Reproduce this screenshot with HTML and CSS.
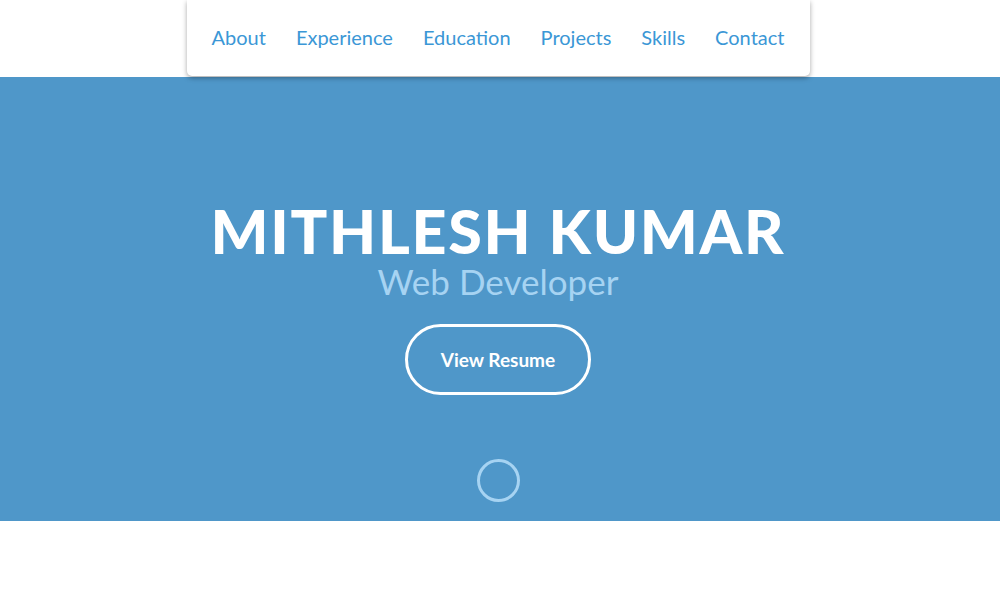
FILE: index.html
```html
<!DOCTYPE html>
<html>
<head>
<meta charset="utf-8">
<link rel="stylesheet" href="styles.css">
</head>
<body>
<header class="topbar">
  <nav class="nav">
    <a href="#">About</a>
    <a href="#">Experience</a>
    <a href="#">Education</a>
    <a href="#">Projects</a>
    <a href="#">Skills</a>
    <a href="#">Contact</a>
  </nav>
</header>
<section class="hero">
  <h1 class="name">MITHLESH KUMAR</h1>
  <p class="role">Web Developer</p>
  <a class="btn" href="#">View Resume</a>
  <span class="scroll"></span>
</section>
</body>
</html>
```
FILE: styles.css
```css
html, body { margin: 0; padding: 0; background: #fff; }
body { font-family: Lato, "Open Sans", sans-serif; }
.topbar {
  height: 77px;
  display: flex;
  justify-content: center;
  padding-right: 4px;
  position: relative;
  z-index: 2;
}
.nav {
  width: 623px;
  height: 76px;
  background: #fff;
  border-radius: 0 0 5px 5px;
  box-shadow: 0 2px 5px rgba(0,0,0,0.35);
  display: flex;
  justify-content: center;
  align-items: center;
  gap: 30px;
  box-sizing: border-box;
  padding-bottom: 3px;
}
.nav a {
  color: #3b97d6;
  text-decoration: none;
  font-size: 20px;
}
.hero {
  background: #4f97c9;
  height: 444px;
  padding-right: 4px;
  display: flex;
  flex-direction: column;
  align-items: center;
  color: #fff;
}
.name {
  margin: 123px 0 0;
  font-size: 61px;
  font-weight: 900;
  letter-spacing: 1.7px;
  line-height: 62px;
}
.role {
  margin: 0;
  font-size: 35px;
  font-weight: 400;
  color: #a6d3f2;
  line-height: 38px;
}
.btn {
  margin-top: 24px;
  width: 186px;
  height: 71px;
  box-sizing: border-box;
  border: 3px solid #fff;
  border-radius: 36px;
  display: flex;
  align-items: center;
  justify-content: center;
  color: #fff;
  text-decoration: none;
  font-size: 19px;
  font-weight: 700;
}
.scroll {
  margin-top: 64px;
  width: 43px;
  height: 43px;
  box-sizing: border-box;
  border: 3px solid #a6d3f2;
  border-radius: 50%;
}
```
